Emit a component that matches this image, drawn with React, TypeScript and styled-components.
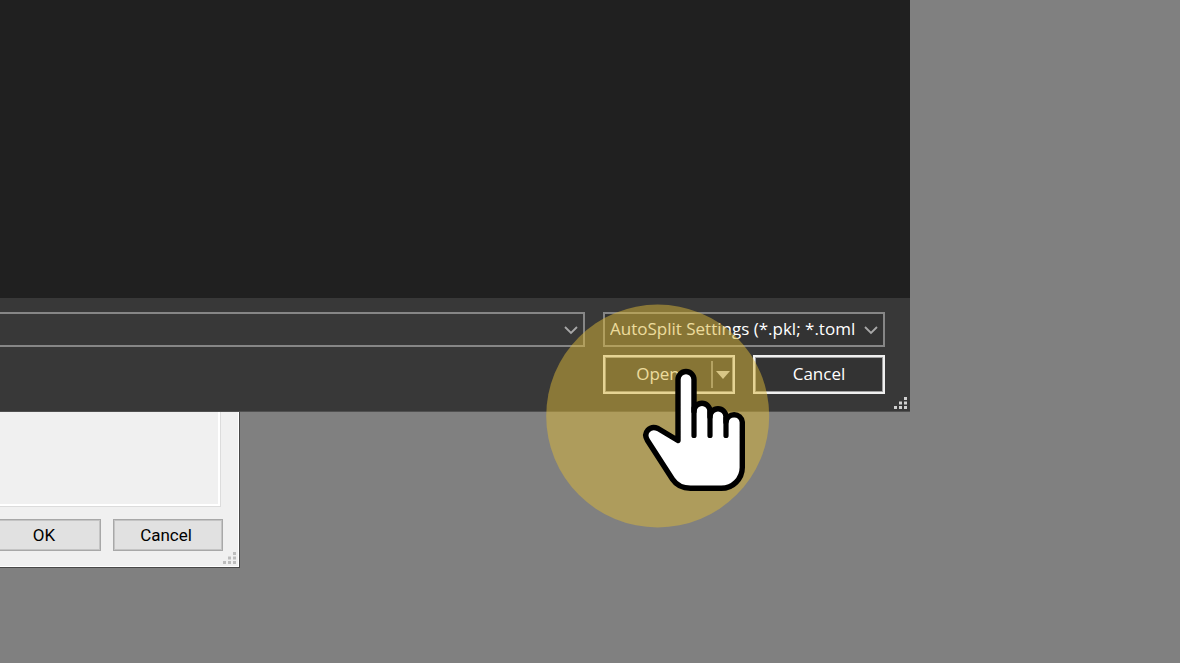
import React from "react";
import styled, { createGlobalStyle } from "styled-components";

const GlobalStyle = createGlobalStyle`
  * { box-sizing: border-box; }
  body { margin: 0; background: #808080; }
`;

const uiFont = `"Open Sans", "Noto Sans", sans-serif`;

const Desktop = styled.main`
  position: relative;
  min-height: 100vh;
  overflow: hidden;
  background: #808080;
`;

const FileDialog = styled.section`
  position: relative;
  margin-right: 270px;
  background: #383838;
  color: #ffffff;
  font: 17px/24px ${uiFont};
`;

const FileList = styled.div`
  height: 298px;
  background: #202020;
`;

const DialogFooter = styled.form`
  display: flex;
  flex-direction: column;
  gap: 8px;
  padding: 14px 25px 17px 0;
  border-bottom: 1px solid #505050;
`;

const FieldRow = styled.div`
  display: flex;
  gap: 18px;
`;

const Field = styled.label<{ $width?: number }>`
  display: flex;
  align-items: center;
  flex: ${(p) => (p.$width ? `0 0 ${p.$width}px` : "1 1 auto")};
  min-width: 0;
  height: 35px;
  padding: 0 5px;
  border: 2px solid #868686;
  border-left-width: ${(p) => (p.$width ? "2px" : "0")};
  background: ${(p) => (p.$width ? "#333333" : "#383838")};
`;

const FileNameInput = styled.input`
  flex: 1;
  min-width: 0;
  padding: 0;
  border: 0;
  outline: 0;
  background: transparent;
  color: inherit;
  font: inherit;
`;

const FilterSelect = styled.select`
  flex: 1;
  min-width: 0;
  padding: 0 0 2px;
  border: 0;
  appearance: none;
  background: transparent;
  color: inherit;
  font: inherit;
`;

const ChevronSvg = styled.svg`
  flex: none;
`;

const Actions = styled.div`
  display: flex;
  justify-content: flex-end;
  gap: 18px;
`;

const ActionFrame = styled.div`
  display: flex;
  width: 132px;
  height: 39px;
  border: 2px solid #f0f0f0;
  box-shadow: inset 0 0 0 1px #a0a0a0;
  background: #333333;
`;

const ActionButton = styled.button`
  flex: 1;
  padding: 0 0 2px;
  border: 0;
  background: transparent;
  color: inherit;
  font: inherit;
`;

const MenuButton = styled.button`
  display: flex;
  align-items: center;
  width: 22px;
  margin: 4px 0;
  padding: 0 0 0 3px;
  border: 0;
  border-left: 2px solid #8e8e8e;
  background: transparent;
`;

const SettingsDialog = styled.section`
  position: relative;
  width: 240px;
  padding-bottom: 16px;
  border: solid #484848;
  border-width: 0 1px 1px 0;
  box-shadow: inset -1px -1px 0 #ffffff;
  background: #f0f0f0;
  color: #000000;
  font: 17px/24px Roboto, "Liberation Sans", sans-serif;
`;

const GroupPanel = styled.div`
  height: 95px;
  margin-right: 18px;
  border: solid #dcdcdc;
  border-width: 0 1px 1px 0;
  box-shadow: inset -2px -2px 0 #ffffff;
`;

const SettingsActions = styled.div`
  display: flex;
  justify-content: flex-end;
  gap: 12px;
  padding: 12px 16px 0 0;
`;

const SettingsButton = styled.button`
  flex: 0 0 110px;
  height: 32px;
  padding: 0 4px 0 0;
  border: 1px solid #a8a8a8;
  box-shadow: inset 0 0 0 1px #c4c4c4;
  background: #e1e1e1;
  color: inherit;
  font: inherit;
`;

const GripSvg = styled.svg`
  position: absolute;
  right: 3px;
  bottom: 3px;
`;

const TapMarker = styled.svg`
  position: absolute;
  left: 546px;
  top: 304px;
  pointer-events: none;
`;

const Chevron = () => (
  <ChevronSvg width="14" height="10" viewBox="0 0 14 10" fill="none" stroke="#a8a8a8" strokeWidth="1.8" aria-hidden="true">
    <path d="M1 2l6 6 6-6" />
  </ChevronSvg>
);

const Grip = ({ color }: { color: string }) => (
  <GripSvg width="13" height="12" viewBox="0 0 13 12" fill={color} aria-hidden="true">
    <path d="M10 0h3v3h-3zM5 4.5h3v3H5zM10 4.5h3v3h-3zM0 9h3v3H0zM5 9h3v3H5zM10 9h3v3h-3z" />
  </GripSvg>
);

export default function App() {
  return (
    <>
      <GlobalStyle />
      <Desktop>
        <FileDialog aria-label="Open file">
          <FileList />
          <DialogFooter onSubmit={(e) => e.preventDefault()}>
            <FieldRow>
              <Field>
                <FileNameInput type="text" aria-label="File name" />
                <Chevron />
              </Field>
              <Field $width={282}>
                <FilterSelect aria-label="File type">
                  <option>AutoSplit Settings (*.pkl; *.toml</option>
                </FilterSelect>
                <Chevron />
              </Field>
            </FieldRow>
            <Actions>
              <ActionFrame>
                <ActionButton type="submit">Open</ActionButton>
                <MenuButton type="button" aria-label="Open options">
                  <svg width="14" height="8" viewBox="0 0 14 8" fill="#d4d4d4" aria-hidden="true">
                    <path d="M0 0h14L7 8z" />
                  </svg>
                </MenuButton>
              </ActionFrame>
              <ActionFrame>
                <ActionButton type="button">Cancel</ActionButton>
              </ActionFrame>
            </Actions>
          </DialogFooter>
          <Grip color="#d0d0d0" />
        </FileDialog>

        <SettingsDialog aria-label="Settings">
          <GroupPanel />
          <SettingsActions>
            <SettingsButton type="button">OK</SettingsButton>
            <SettingsButton type="button">Cancel</SettingsButton>
          </SettingsActions>
          <Grip color="#bdbdbd" />
        </SettingsDialog>

        <TapMarker width="224" height="224" viewBox="546 304 224 224" aria-hidden="true">
          <circle cx="657.7" cy="416" r="111.5" fill="#dcb838" fillOpacity="0.5" />
          <path
            d="M678 440.5V379.5a8 8 0 0 1 16 0V411.3a8 8 0 0 1 16 0V416.7a8 8 0 0 1 16 0V422a8.2 8.2 0 0 1 16.3 0V467.5a21 21 0 0 1-21 20.8H690.5c-8 0-14-3-18-9L647.5 440.5c-5-8 2.5-15.5 10.5-12z"
            fill="#fff"
            stroke="#000"
            strokeWidth="5.4"
            strokeLinejoin="round"
          />
          <path d="M694 408V435.5M710 412V435.5M726 418V435.5" fill="none" stroke="#000" strokeWidth="5.2" strokeLinecap="round" />
        </TapMarker>
      </Desktop>
    </>
  );
}
